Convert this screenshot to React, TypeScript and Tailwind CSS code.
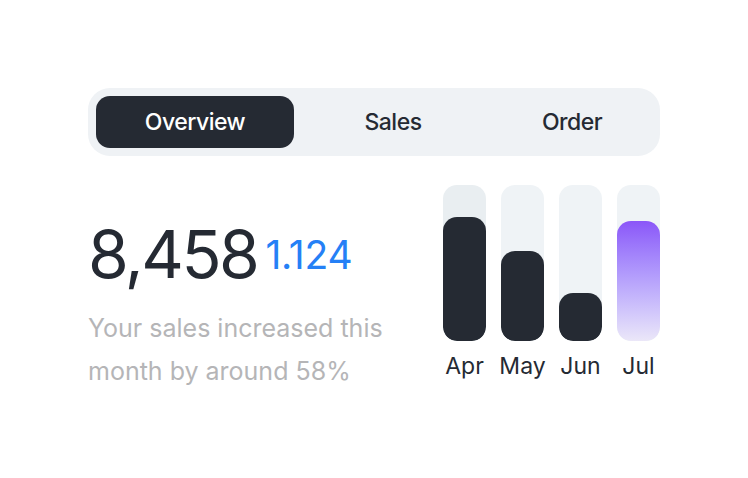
const tabs = ["Overview", "Sales", "Order"];

const bars = [
  { label: "Apr", fill: 124, track: "bg-[#e9eef1]", color: "bg-[#252a33]" },
  { label: "May", fill: 90, track: "bg-[#eff3f6]", color: "bg-[#252a33]" },
  { label: "Jun", fill: 48, track: "bg-[#eff3f6]", color: "bg-[#252a33]" },
  {
    label: "Jul",
    fill: 120,
    track: "bg-[#eff3f6]",
    color: "bg-gradient-to-b from-[#8b55f8] to-[#ebe7f8]",
  },
];

export default function App() {
  return (
    <div
      className="w-full h-[478px] bg-white px-[88px] pt-[88px]"
      style={{ fontFamily: "Inter, 'Noto Sans', sans-serif" }}
    >
      {/* tabs */}
      <div className="flex h-[68px] rounded-[22px] bg-[#eff2f5] p-2">
        {tabs.map((t, i) => (
          <div
            key={t}
            className={
              i === 0
                ? "flex w-[198px] items-center justify-center rounded-[14px] bg-[#252a33] text-[23px] font-medium tracking-[-0.5px] text-white"
                : i === 1
                  ? "flex w-[198px] items-center justify-center text-[23px] font-medium tracking-[-0.5px] text-[#252a33]"
                  : "flex flex-1 items-center justify-center text-[23px] font-medium tracking-[-0.5px] text-[#252a33]"
            }
          >
            {t}
          </div>
        ))}
      </div>

      <div className="mt-[29px] flex justify-between">
        {/* summary */}
        <div className="mt-[36px]">
          <div className="flex items-center gap-[8px]">
            <span className="text-[66px] leading-none tracking-[-2.5px] text-[#252a33]">
              8,458
            </span>
            <span className="text-[39px] leading-none tracking-[-0.2px] text-[#2580f6]">
              1.124
            </span>
          </div>
          <p className="mt-[20px] w-[310px] text-[25px] leading-[43px] text-[#b5b5b7]">
            Your sales increased this month by around 58%
          </p>
        </div>

        {/* chart */}
        <div className="flex gap-[15px]">
          {bars.map((b) => (
            <div key={b.label} className="flex w-[43px] flex-col items-center">
              <div
                className={`flex h-[156px] w-full flex-col justify-end overflow-hidden rounded-[14px] ${b.track}`}
              >
                <div
                  className={`w-full rounded-[14px] ${b.color}`}
                  style={{ height: b.fill }}
                />
              </div>
              <span className="mt-[11px] text-[23px] leading-[28px] text-[#252a33]">
                {b.label}
              </span>
            </div>
          ))}
        </div>
      </div>
    </div>
  );
}
